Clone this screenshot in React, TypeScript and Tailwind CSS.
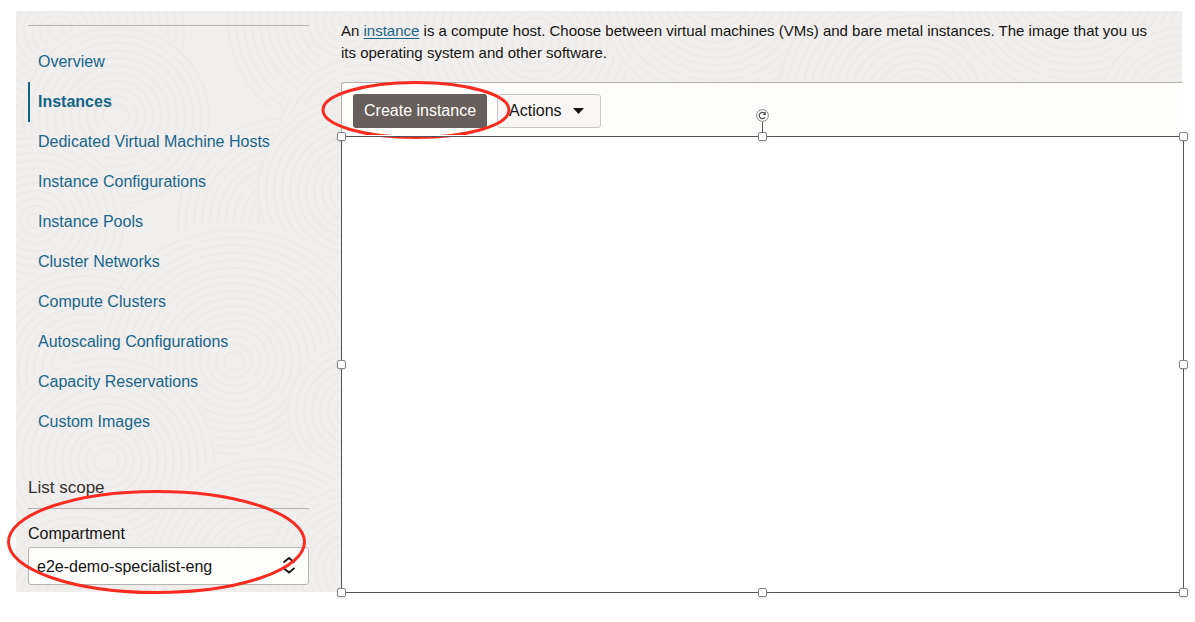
import React from "react";

const navItems = [
  "Overview",
  "Instances",
  "Dedicated Virtual Machine Hosts",
  "Instance Configurations",
  "Instance Pools",
  "Cluster Networks",
  "Compute Clusters",
  "Autoscaling Configurations",
  "Capacity Reservations",
  "Custom Images",
];

const swirls = [
  [40, 20, 130], [330, 10, 120], [520, 30, 130], [700, -20, 120], [900, 90, 140], [1060, -30, 130],
  [270, 210, 110], [100, 105, 95], [350, 130, 90], [20, 210, 90], [1170, 100, 90],
  [340, 180, 100], [70, 360, 110], [218, 350, 140], [340, 400, 70],
  [90, 450, 110], [250, 560, 120], [340, 560, 90], [60, 590, 90],
];

function Texture() {
  return (
    <svg className="absolute inset-0 h-full w-full" aria-hidden="true">
      {swirls.map(([cx, cy, r], i) => (
        <g key={i} fill="none" stroke="#ecebe9" strokeWidth="2">
          <circle cx={cx} cy={cy} r={r} fill="#f0efed" stroke="none" />
          {Array.from({ length: Math.floor(r / 8) }, (_, k) => (
            <ellipse key={k} cx={cx} cy={cy} rx={r - 2 - k * 8} ry={(r - 2 - k * 8) * 0.95} />
          ))}
        </g>
      ))}
    </svg>
  );
}

function RotateHandle() {
  return (
    <span className="absolute bottom-full flex flex-col items-center">
      <svg className="size-[13px]" viewBox="0 0 13 13" fill="none" aria-hidden="true">
        <circle cx="6.500" cy="6.500" r="5.900" fill="#fff" stroke="#858585" />
        <path d="M8.900 8.300A3.100 3.100 0 1 1 8.600 4.300" stroke="#555" strokeWidth="1.300" />
        <path d="M9.900 2.600v3.500H6.500Z" fill="#555" />
      </svg>
      <span className="h-[11px] w-px bg-[#555]" />
    </span>
  );
}

function SelectionFrame() {
  return (
    <div className="absolute inset-0 z-20 border border-[#555] shadow-[0_-1px_0_#fdfdfb]">
      <div className="absolute -inset-[5px] flex flex-col justify-between">
        {["top", "middle", "bottom"].map((row) => (
          <div key={row} className="flex justify-between">
            {["left", "center", "right"].map((col) =>
              row === "middle" && col === "center" ? null : (
                <span
                  key={col}
                  className="relative flex size-[9px] justify-center rounded-[2px] border border-[#858585] bg-white shadow-sm"
                >
                  {row === "top" && col === "center" && <RotateHandle />}
                </span>
              ),
            )}
          </div>
        ))}
      </div>
    </div>
  );
}

function Sidebar() {
  return (
    <aside className="relative w-[325px] shrink-0 pt-[14px] pr-8 pb-[7px] pl-3">
      <nav aria-label="Compute" className="border-t border-[#b8b5b2] pt-4">
        <ul>
          {navItems.map((item) => (
            <li key={item} className="flex h-10 items-center">
              <a
                href="#"
                aria-current={item === "Instances" ? "page" : undefined}
                className={
                  item === "Instances"
                    ? "flex h-10 items-center border-l-2 border-[#0d6286] pl-2 font-bold text-[#136587]"
                    : "pl-[10px] text-[#19658a]"
                }
              >
                {item}
              </a>
            </li>
          ))}
        </ul>
      </nav>
      <section className="pt-[34px]">
        <h2 className="border-b border-[#b3afac] pb-2 text-[17px] leading-6 text-[#33302e]">
          List scope
        </h2>
        <label htmlFor="compartment" className="block pt-[13px] pb-px leading-6">
          Compartment
        </label>
        <div className="relative">
          <select
            id="compartment"
            className="block h-[38px] w-full appearance-none rounded-[3px] border border-[#b8b4b1] bg-[#fdfdfc] pt-px pl-2"
          >
            <option>e2e-demo-specialist-eng</option>
          </select>
          <svg
            className="pointer-events-none absolute top-[9px] right-[14px] h-[18px] w-3"
            viewBox="0 0 12 18"
            fill="none"
            stroke="#161513"
            strokeWidth="1.8"
            aria-hidden="true"
          >
            <path d="M.500 6.500 6 2l5.500 4.500M.500 12 6 16.500 11.500 12" />
          </svg>
        </div>
      </section>
      <svg
        className="pointer-events-none absolute -bottom-[2px] -left-[9px] h-[104px] w-[300px]"
        viewBox="0 0 300 104"
        fill="none"
        aria-hidden="true"
      >
        <ellipse cx="149.500" cy="52" rx="148" ry="50.500" stroke="#fa2b20" strokeWidth="3" />
      </svg>
    </aside>
  );
}

export default function App() {
  return (
    <div className="py-[11px] pr-[13px] pl-4 font-['Liberation_Sans',Arial,sans-serif] text-[16px] leading-[22px] text-[#161513]">
      <div className="relative flex bg-[#f0efed]">
        <div className="absolute inset-0 overflow-hidden">
          <Texture />
        </div>
        <Sidebar />
        <main className="relative flex min-w-0 flex-1 flex-col">
          <p className="overflow-hidden pt-[9px] text-[15px] whitespace-nowrap">
            An{" "}
            <a href="#" className="text-[#19658a] underline underline-offset-2">
              instance
            </a>{" "}
            is a compute host. Choose between virtual machines (VMs) and bare metal instances. The image that you us
            <br />
            its operating system and other software.
          </p>
          <div className="relative z-10 mt-[18px] flex gap-[10px] rounded-tl-[3px] border-t border-l border-[#b5aeab] bg-[#fdfdfb] pt-[11px] pb-2 pl-[11px]">
            <button type="button" className="h-[34px] rounded-[3px] bg-[#665f5b] px-[11px] text-white">
              Create instance
            </button>
            <button
              type="button"
              className="flex h-[34px] items-center gap-[11px] rounded-[3px] border border-[#c9c6c3] bg-[#f7f6f5] pr-4 pl-[11px]"
            >
              Actions
              <svg className="h-[6px] w-[11px]" viewBox="0 0 11 6" aria-hidden="true">
                <path d="M0 0h11L5.500 6Z" fill="#161513" />
              </svg>
            </button>
            <svg
              className="pointer-events-none absolute -top-[2px] -left-[21px] h-[58px] w-[190px]"
              viewBox="0 0 190 58"
              fill="none"
              aria-hidden="true"
            >
              <ellipse cx="95" cy="29" rx="93" ry="27.500" stroke="#fa2b20" strokeWidth="3" />
            </svg>
          </div>
          <div className="relative -mr-[2px] -mb-px flex-1 bg-white">
            <SelectionFrame />
          </div>
        </main>
      </div>
    </div>
  );
}
